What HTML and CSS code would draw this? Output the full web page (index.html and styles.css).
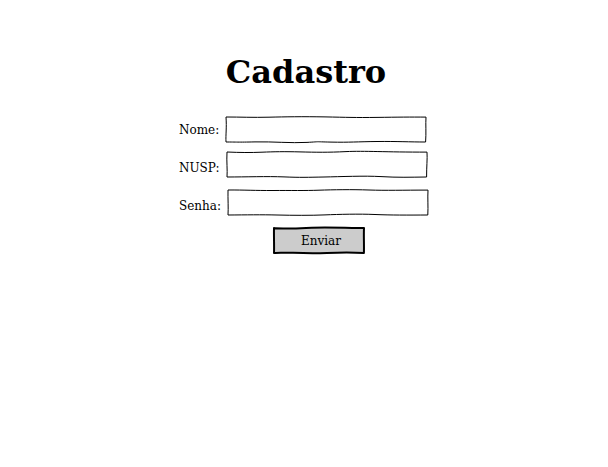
FILE: index.html
```html
<!DOCTYPE html>
<html lang="pt-BR">
<head>
<meta charset="utf-8">
<meta name="viewport" content="width=device-width, initial-scale=1">
<title>Cadastro</title>
<link rel="stylesheet" href="styles.css">
</head>
<body>
<main class="page">
  <h1 class="title">Cadastro</h1>
  <form class="form">
    <div class="row">
      <label for="nome">Nome:</label>
      <div class="field">
        <svg class="sketch" viewBox="0 0 202 27" preserveAspectRatio="none" aria-hidden="true"><path d="M1 1C15 1 28 1.6 44 1.2S78 .5 100 .9S130 1.7 152 1.4S185 1 201 1.1C200.5 8 201.3 17 200.6 26C185 26 172 25.3 152 25.5S125 26.5 106 26.1S98 25.5 82 26.4S48 25.5 30 25.9S12 26 1 26C.6 19 1.8 12 1 1Z"/></svg>
        <input id="nome" type="text">
      </div>
    </div>
    <div class="row row-low">
      <label for="nusp">NUSP:</label>
      <div class="field">
        <svg class="sketch" viewBox="0 0 202 27" preserveAspectRatio="none" aria-hidden="true"><path d="M1 1C14 1.6 24 1.7 36 1.2S58 .5 74 .9S102 1.5 120 .6S160 1.2 201 1.1C201.5 8 200.5 16 200.6 26C184 26.2 172 26.6 155 25.6S115 25.7 98 26S75 26.6 58 25.9S20 26 1 26C1.6 19 .4 11 1 1Z"/></svg>
        <input id="nusp" type="text">
      </div>
    </div>
    <div class="row row-low">
      <label for="senha">Senha:</label>
      <div class="field">
        <svg class="sketch" viewBox="0 0 202 27" preserveAspectRatio="none" aria-hidden="true"><path d="M1 1C18 .9 28 1.6 46 1.5S78 1.7 92 1.2S125 .4 142 1S176 1.1 201 1.1C200.5 9 201.3 17 200.8 26C180 26.1 164 26.2 148 25.5S112 25.3 98 25.9S66 26.4 50 26S20 25.9 1 26C1.5 19 .8 10 1 1Z"/></svg>
        <input id="senha" type="password">
      </div>
    </div>
    <button class="submit" type="submit">
      <svg class="sketch sketch-filled" viewBox="0 0 92 27" preserveAspectRatio="none" aria-hidden="true"><path d="M1 1.1C10 1.5 18 1.9 28 1.2S60 .5 72 .8S84 1.2 91 1.1C90.6 9 91.2 18 90.9 25.9C80 25.2 64 25.4 54 25.9S30 26.2 20 25.8S8 26 1 25.9C1.3 19 .8 10 1 1.1Z"/></svg>
      <span class="submit-text">Enviar</span>
    </button>
  </form>
</main>
</body>
</html>
```
FILE: styles.css
```css
* {
  box-sizing: border-box;
}

body {
  margin: 0;
  background: #fff;
  color: #000;
  font: 12px/20px "DejaVu Serif", serif;
}

.page {
  display: flex;
  flex-direction: column;
  align-items: center;
  padding: 52px 16px;
}

.title {
  margin: 0 0 24px;
  padding-left: 4px;
  font-size: 32px;
  line-height: 40px;
}

.form {
  display: flex;
  flex-direction: column;
  align-items: flex-start;
  width: 100%;
  max-width: 250px;
}

.row {
  display: flex;
  align-items: center;
  gap: 6px;
  width: 100%;
}

.row-low {
  align-items: flex-end;
  margin-top: 8px;
}

.row-low + .row-low {
  margin-top: 11px;
}

.field,
.submit {
  position: relative;
  height: 27px;
}

.field {
  flex: 0 1 202px;
  min-width: 0;
}

.field input {
  position: relative;
  display: block;
  width: 100%;
  height: 100%;
  padding: 0 6px;
  border: 0;
  background: transparent;
  font: inherit;
}

.sketch {
  position: absolute;
  inset: 0;
  width: 100%;
  height: 100%;
  overflow: visible;
  fill: #fff;
  stroke: #000;
  stroke-width: 1;
  stroke-linejoin: round;
}

.sketch-filled {
  fill: #ccc;
  stroke-width: 2;
}

.submit {
  width: 92px;
  margin: 11px 0 0 94px;
  padding: 0 0 0 4px;
  border: 0;
  background: none;
  color: inherit;
  font: inherit;
  cursor: pointer;
}

.submit-text {
  position: relative;
}
```
